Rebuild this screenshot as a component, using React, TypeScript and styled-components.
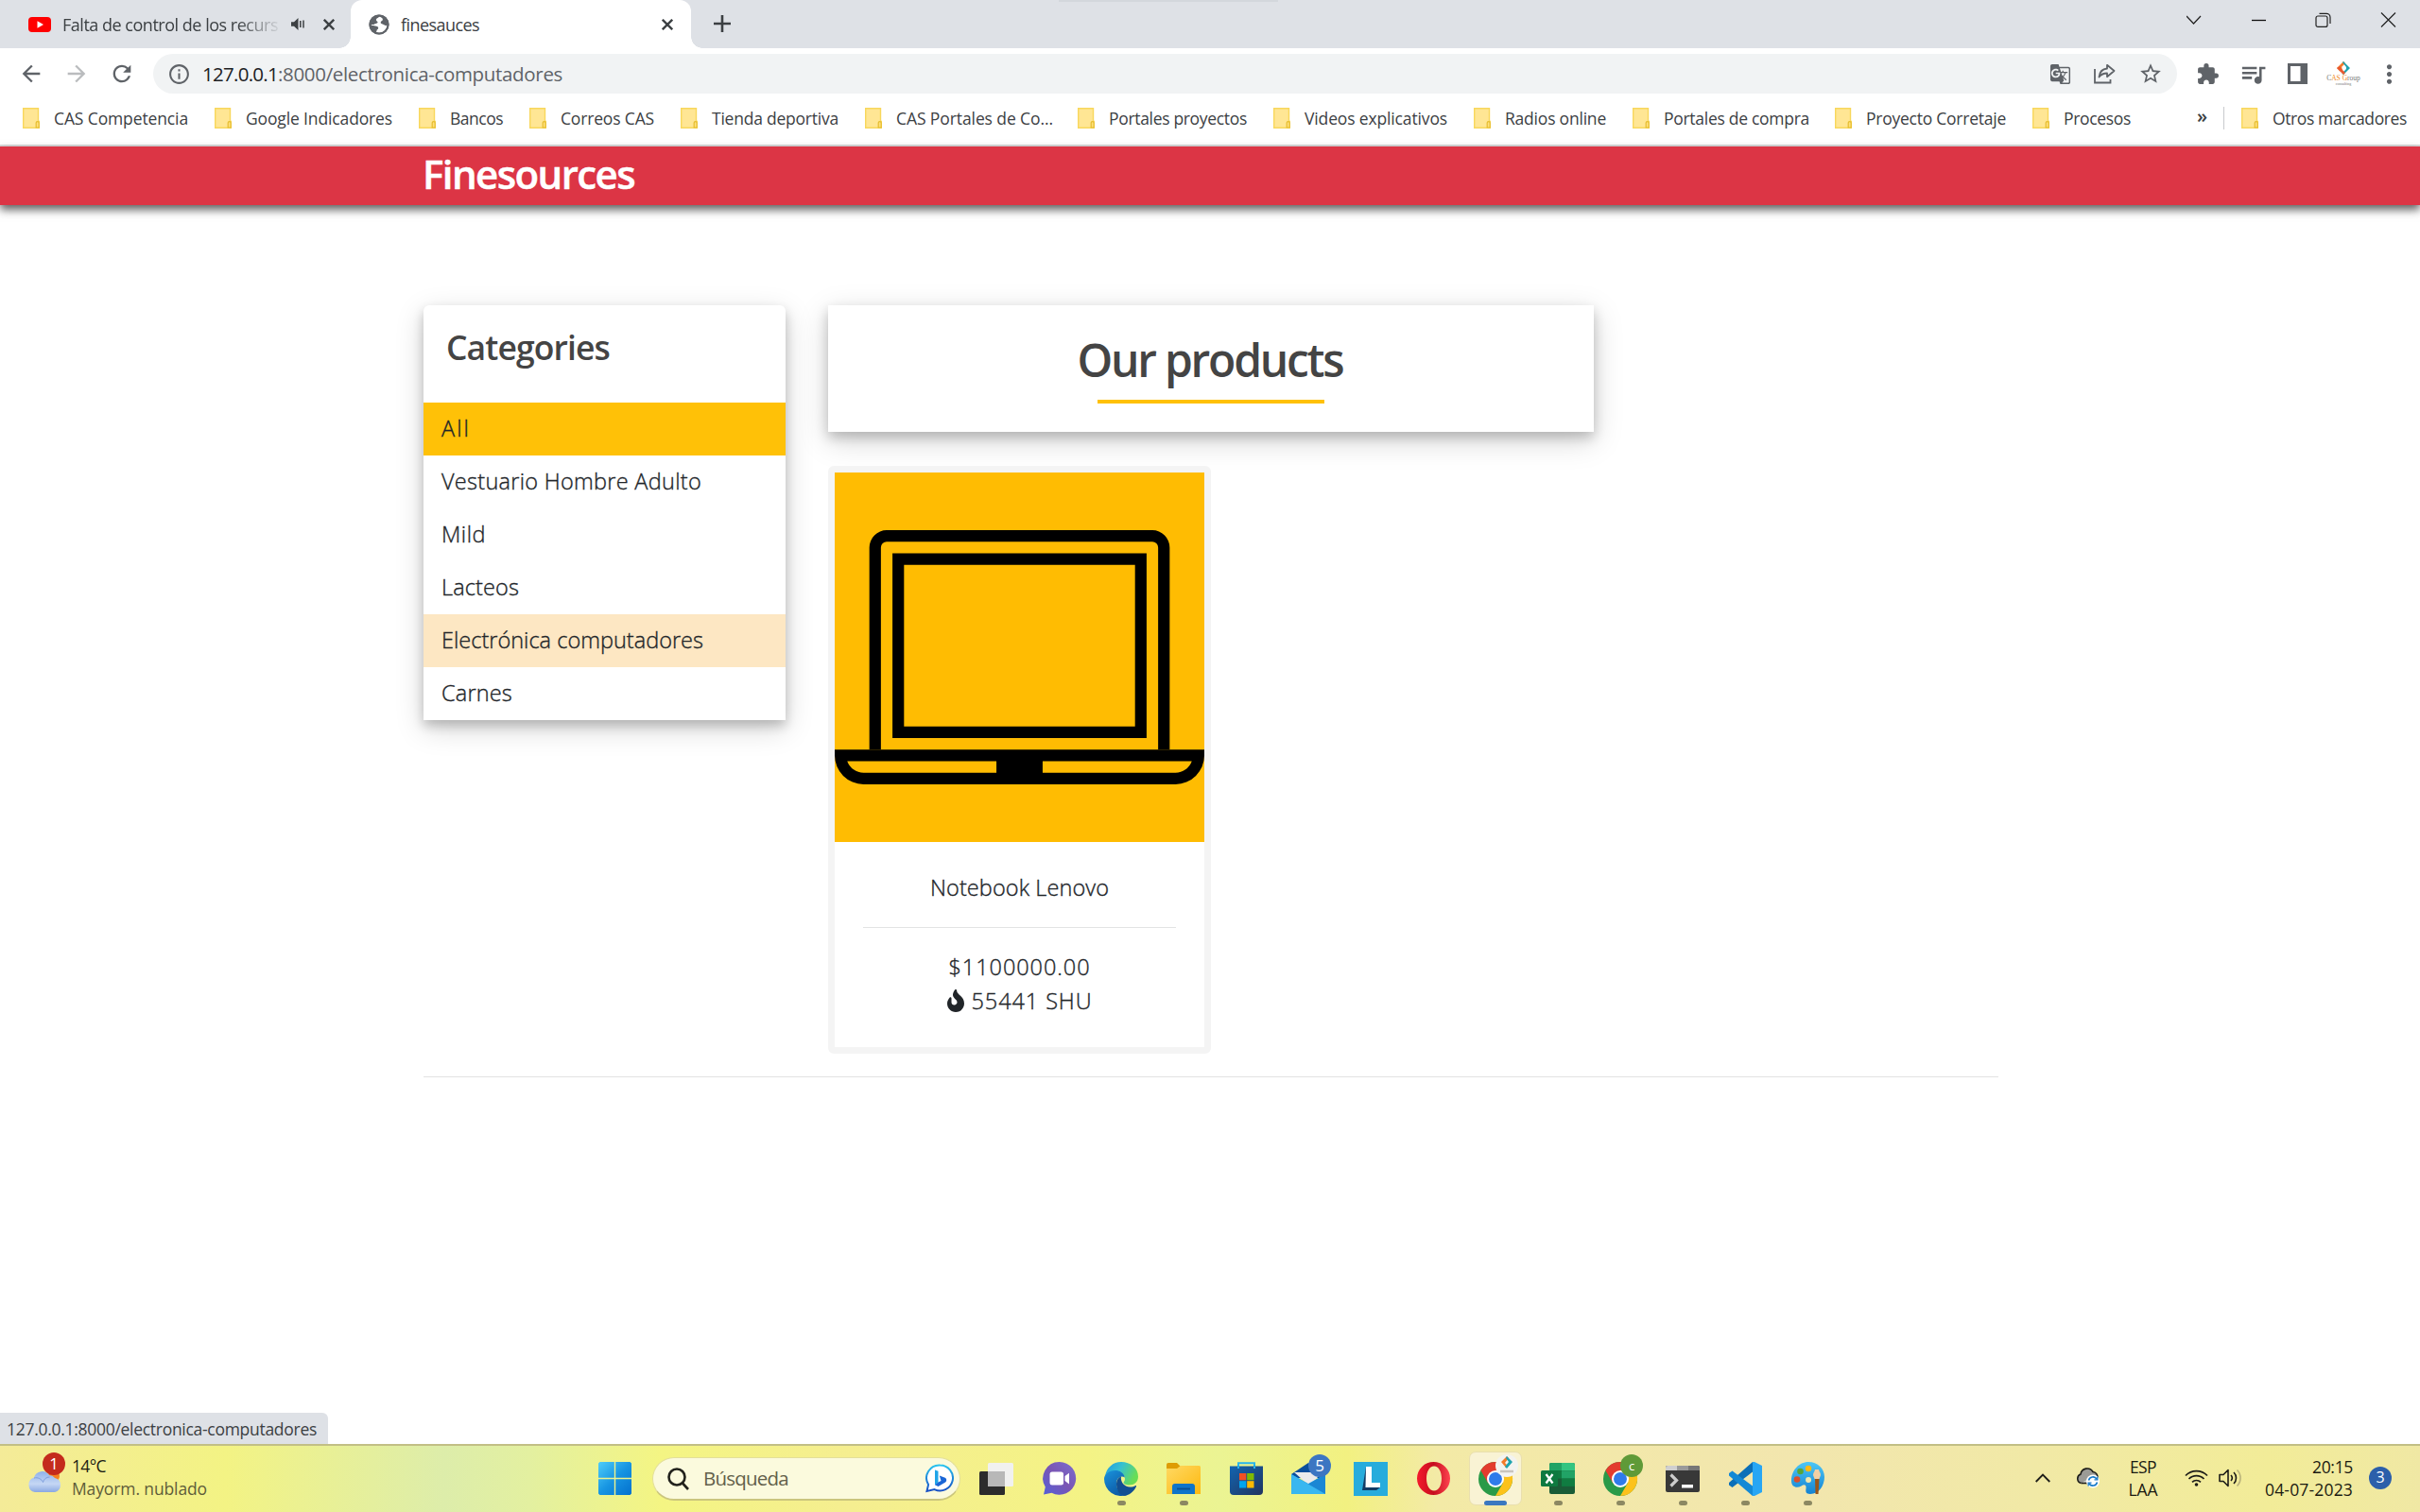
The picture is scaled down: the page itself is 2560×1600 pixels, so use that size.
import React, { useLayoutEffect, useRef } from "react";
import styled, { createGlobalStyle } from "styled-components";
import {
  MdArrowBack,
  MdArrowForward,
  MdRefresh,
  MdInfoOutline,
  MdGTranslate,
  MdStarBorder,
  MdExtension,
  MdQueueMusic,
  MdMoreVert,
} from "react-icons/md";
import { FaFire } from "react-icons/fa";

const uiFont = `"Open Sans", "Noto Sans", sans-serif`;
const siteFont = `"Open Sans", "Noto Sans", sans-serif`;

const GlobalStyle = createGlobalStyle`
  * { box-sizing: border-box; }
  html, body { margin: 0; padding: 0; background: #fff; overflow: hidden; }
  svg { display: block; flex: none; }
`;

/* ---------- text tracked to a given width ---------- */

const Tracked = styled.span`
  display: inline-block;
  white-space: pre;
`;

function Text({ w, children }: { w: number; children: string }) {
  const ref = useRef<HTMLSpanElement>(null);
  useLayoutEffect(() => {
    const el = ref.current;
    if (!el) return;
    el.style.letterSpacing = "0px";
    const natural = el.getBoundingClientRect().width;
    el.style.letterSpacing = `${(w - natural) / children.length}px`;
  }, [w, children]);
  return <Tracked ref={ref}>{children}</Tracked>;
}

/* ---------- window ---------- */

const Window = styled.div`
  display: flex;
  flex-direction: column;
  width: 2560px;
  height: 1600px;
  overflow: hidden;
  font-family: ${uiFont};
  color: #3c4043;
`;

const TabStrip = styled.div`
  position: relative;
  display: flex;
  height: 51px;
  background: #dee1e6;
`;

const DragHandle = styled.div`
  position: absolute;
  left: 1120px;
  top: 0;
  width: 232px;
  height: 2px;
  background: #d3d7dc;
`;

const Tab = styled.div<{ $active?: boolean; $w: number; $pad: number }>`
  position: relative;
  display: flex;
  align-items: center;
  width: ${(p) => p.$w}px;
  padding-left: ${(p) => p.$pad}px;
  background: ${(p) => (p.$active ? "#fff" : "transparent")};
  border-radius: 12px 12px 0 0;
  font-size: 18px;
  line-height: 50px;
  ${(p) =>
    p.$active &&
    `
    &::before, &::after {
      content: "";
      position: absolute;
      bottom: 0;
      width: 12px;
      height: 12px;
    }
    &::before { left: -12px; background: radial-gradient(circle at 0 0, transparent 11.5px, #fff 12px); }
    &::after { right: -12px; background: radial-gradient(circle at 100% 0, transparent 11.5px, #fff 12px); }
  `}
`;

const TabTitle = styled.span<{ $w: number; $fade?: boolean }>`
  width: ${(p) => p.$w}px;
  margin-left: 12px;
  overflow: hidden;
  white-space: nowrap;
  ${(p) => p.$fade && `mask-image: linear-gradient(90deg, #000 185px, transparent 233px);`}
`;

const NewTab = styled.div`
  padding: 16px 0 0 24px;
`;

const WindowButtons = styled.div`
  display: flex;
  margin-left: auto;
  padding: 13px 25px 0 0;
  gap: 51px;
`;

/* ---------- toolbar ---------- */

const Toolbar = styled.div`
  display: flex;
  align-items: center;
  height: 54px;
  padding-left: 19px;
  color: #5f6368;
`;

const NavButtons = styled.div`
  display: flex;
  align-items: center;
  gap: 20px;
  width: 143px;
`;

const Omnibox = styled.div`
  display: flex;
  align-items: center;
  width: 2141px;
  height: 42px;
  padding: 0 15px;
  border-radius: 21px;
  background: #f1f3f4;
`;

const Url = styled.div`
  margin-left: 12px;
  font-size: 20.5px;
  line-height: 40px;
  white-space: nowrap;
  color: #5f6368;
  b { font-weight: 400; color: #202124; }
`;

const OmniboxActions = styled.div`
  display: flex;
  align-items: center;
  gap: 24px;
  margin-left: auto;
`;

const Extensions = styled.div`
  display: flex;
  align-items: center;
  margin-left: 20px;
`;

const Gap = styled.span<{ $w: number }>`
  flex: none;
  width: ${(p) => p.$w}px;
`;

const BookmarkBar = styled.div`
  display: flex;
  align-items: center;
  height: 50px;
  padding: 0 0 8px 24px;
  border-bottom: 2px solid #dadada;
  font-size: 17.5px;
`;

const Bookmark = styled.div<{ $w?: number }>`
  display: flex;
  flex: none;
  align-items: center;
  gap: 15px;
  width: ${(p) => (p.$w ? `${p.$w}px` : "auto")};
  line-height: 24px;
`;

const MoreMarks = styled.span`
  width: 28px;
  font-size: 20px;
  font-weight: 600;
  line-height: 20px;
  padding-bottom: 4px;
`;

const Divider = styled.span`
  width: 1px;
  height: 24px;
  margin-right: 18px;
  background: #c8cacd;
`;

/* ---------- site ---------- */

const Site = styled.main`
  position: relative;
  display: flex;
  flex-direction: column;
  flex: 1;
  font-family: ${siteFont};
  color: #212529;
`;

const Navbar = styled.header`
  height: 62px;
  padding-left: 447px;
  background: #dc3545;
  box-shadow: 0 5px 9px rgba(0, 0, 0, 0.62);
  color: #fff;
  font-size: 42px;
  font-weight: 600;
  -webkit-text-stroke: 0.5px #fff;
  line-height: 58px;
`;

const Container = styled.div`
  display: flex;
  align-items: flex-start;
  gap: 45px;
  width: 1666px;
  height: 817px;
  margin: 106px 0 0 448px;
  border-bottom: 1px solid #e2e3e3;
`;

const cardShadow = `box-shadow: 0 6px 12px rgba(0, 0, 0, 0.2), 0 9px 30px rgba(0, 0, 0, 0.17);`;

const Categories = styled.aside`
  width: 383px;
  border-radius: 6px 6px 0 0;
  background: #fff;
  ${cardShadow}
`;

const CategoriesTitle = styled.h2`
  height: 103px;
  margin: 0;
  padding: 20px 0 0 24px;
  color: #444;
  font-size: 35.5px;
  font-weight: 600;
  line-height: 49px;
`;

const Category = styled.div<{ $bg?: string }>`
  height: 56px;
  padding-left: 19px;
  background: ${(p) => p.$bg || "transparent"};
  font-size: 23.5px;
  font-weight: 300;
  -webkit-text-stroke: 0.35px #212529;
  line-height: 55px;
`;

const Products = styled.section`
  display: flex;
  flex-direction: column;
  gap: 36px;
  width: 810px;
`;

const Heading = styled.div`
  display: flex;
  flex-direction: column;
  align-items: center;
  height: 134px;
  padding: 25px 2px 0 0;
  background: #fff;
  color: #444;
  font-size: 48px;
  font-weight: 600;
  line-height: 66px;
  ${cardShadow}
`;

const Underline = styled.div`
  width: 240px;
  height: 4px;
  margin: 9px 0 0 2px;
  background: #ffc107;
`;

const ProductCard = styled.article`
  display: flex;
  flex-direction: column;
  align-items: center;
  width: 405px;
  height: 622px;
  border: 7px solid #f4f4f4;
  border-radius: 6px;
  background: #fff;
  font-size: 23.5px;
  font-weight: 300;
  -webkit-text-stroke: 0.35px #212529;
  line-height: 36px;
`;

const ProductName = styled.div`
  margin-top: 30px;
`;

const Rule = styled.div`
  width: 331px;
  height: 1px;
  margin: 24px 0 23px;
  background: #e2e3e4;
`;

const Heat = styled.div`
  display: flex;
  align-items: center;
  gap: 5px;
  padding-right: 3px;
`;

const StatusBubble = styled.div`
  position: absolute;
  left: 0;
  bottom: 0;
  width: 347px;
  height: 33px;
  padding-left: 7px;
  border-radius: 0 6px 0 0;
  background: #dee1e6;
  color: #3c4043;
  font-size: 17.5px;
  line-height: 35px;
`;

/* ---------- taskbar ---------- */

const Taskbar = styled.footer`
  display: flex;
  align-items: center;
  height: 72px;
  border-top: 2px solid #c2bf85;
  background: linear-gradient(
    90deg,
    #f4eb98 0,
    #f3f384 240px,
    #ddedaa 470px,
    #e3f0a0 560px,
    #f4f583 700px,
    #f5ee90 900px,
    #f4f385 1150px,
    #ebf493 1290px,
    #f2f181 1425px,
    #f3eaa6 1520px,
    #f2e6ae 1900px,
    #f1e9a6 2150px,
    #f2ec98 2400px,
    #f0e8a4 2560px
  );
  font-size: 17.5px;
  color: #1b1b12;
`;

const Weather = styled.div`
  position: relative;
  display: flex;
  width: 617px;
  height: 70px;
  padding: 9px 0 0 76px;
  line-height: 24px;
  p { margin: 0; color: #5f5d3a; }
  p:first-child { color: #1b1b12; }
`;

const WeatherArt = styled.div`
  position: absolute;
  left: 28px;
  top: 6px;
`;

const Slot = styled.div<{ $active?: boolean }>`
  position: relative;
  display: flex;
  flex: none;
  align-items: center;
  justify-content: center;
  width: 66px;
  height: 70px;
  padding-bottom: 1px;
  ${(p) =>
    p.$active &&
    `&::before {
      content: "";
      position: absolute;
      inset: 6px 5px 7px 5px;
      border-radius: 7px;
      background: #f9f3d4;
      border: 1px solid #e9dfae;
    }`}
  svg { position: relative; overflow: visible; }
`;

const Running = styled.span<{ $active?: boolean }>`
  position: absolute;
  bottom: 7px;
  width: ${(p) => (p.$active ? 24 : 9)}px;
  height: 5px;
  border-radius: 3px;
  background: ${(p) => (p.$active ? "#3a78c0" : "#8c8862")};
`;

const Badge = styled.span<{ $bg: string; $x: number; $y: number; $size?: number }>`
  position: absolute;
  left: ${(p) => p.$x}px;
  top: ${(p) => p.$y}px;
  width: 24px;
  height: 24px;
  border-radius: 50%;
  background: ${(p) => p.$bg};
  color: #fff;
  font-size: ${(p) => p.$size || 17}px;
  line-height: 24px;
  text-align: center;
`;

const Search = styled.div`
  display: flex;
  align-items: center;
  width: 326px;
  height: 46px;
  margin: 0 5px 0 7px;
  padding: 0 6px 0 15px;
  border: 1px solid #e3df9a;
  border-bottom: 2px solid #cbc67d;
  border-radius: 23px;
  background: #fbfadd;
  color: #62604a;
  font-size: 20.5px;
  line-height: 40px;
`;

const SearchLabel = styled.span`
  flex: 1;
  margin: -2px 0 0 15px;
`;

const Tray = styled.div`
  display: flex;
  align-items: center;
  margin-left: auto;
  padding: 0 30px 2px 0;
`;

const Stack = styled.div<{ $align: "center" | "right"; $w: number }>`
  display: flex;
  flex-direction: column;
  align-items: ${(p) => (p.$align === "right" ? "flex-end" : "center")};
  width: ${(p) => p.$w}px;
  line-height: 24px;
  margin-top: -1px;
`;

const Notifications = styled.span`
  width: 24px;
  height: 24px;
  margin-left: 17px;
  border-radius: 50%;
  background: #2c5faa;
  color: #fff;
  font-size: 16px;
  line-height: 23px;
  text-align: center;
`;

const ServerMark = styled.span`
  display: flex;
  flex-direction: column;
  align-items: center;
  width: 32px;
  font-family: "Liberation Serif", serif;
  font-size: 7.5px;
  line-height: 8px;
  white-space: nowrap;
  color: #777;
  i { font-style: normal; color: #f08a24; }
  small { font-size: 4px; line-height: 4px; }
`;

/* ---------- drawings ---------- */

const Cross = ({ size = 12, stroke = 2.4 }: { size?: number; stroke?: number }) => (
  <svg width={size} height={size} viewBox={`0 0 ${size} ${size}`}>
    <path d={`M.8 .8L${size - 0.8} ${size - 0.8}M${size - 0.8} .8L.8 ${size - 0.8}`} stroke="#3c4043" strokeWidth={stroke} />
  </svg>
);

const YouTube = () => (
  <svg width="24" height="16" viewBox="0 0 24 16">
    <rect width="24" height="16" rx="4" fill="#f00" />
    <path d="M9.5 4.3L16 8l-6.500 3.700z" fill="#fff" />
  </svg>
);

const Globe = () => (
  <svg width="22" height="22" viewBox="0 0 22 22">
    <circle cx="11" cy="11" r="10.500" fill="#5f6368" />
    <path
      d="M11.500 2.500C10 4 7.500 4.500 8 6.500c.4 1.400 2 1 1.500 2.500C9 10.200 6.500 9.500 5.500 11H2.500c.5 1.500 3 1 4.500 1.500 1.500.4 3 .3 3.200 2 .2 1.500-1.700 1.500-1.700 3L8 19c2 .9 4.500.9 6.500 0 3-1.300 5-4.200 5-7.500-1.300.8-2.300.6-3.200-.3-1.200-1.200-3.600-.5-3.600-2.500 0-1.500 2-1.500 2.200-3 .1-1.400-1.300-2-3.400-3.200z"
      fill="#fff"
    />
    <circle cx="11" cy="11" r="9.600" fill="none" stroke="#5f6368" strokeWidth="2" />
  </svg>
);

const Speaker = () => (
  <svg width="14" height="13" viewBox="0 0 14 13">
    <path d="M0 4.300h3L7.500 0v13L3 8.700H0z" fill="#3c4043" />
    <path d="M9.800 3v7M13 2.500v8" stroke="#3c4043" strokeWidth="1.500" />
  </svg>
);

const Folder = () => (
  <svg width="18" height="22" viewBox="0 0 18 22">
    <path d="M.7 .7H16.500V14.500H17.300V21.300H.7z" fill="#ffe694" stroke="#f8d75c" strokeWidth="1.400" />
    <path d="M14.200 21V16c0-1.800 3-1.800 3 0v5z" fill="#ffe07a" stroke="#e6bd2f" strokeWidth="1.200" />
  </svg>
);

const Share = () => (
  <svg width="23" height="22" viewBox="0 0 23 22" fill="none" stroke="#5f6368" strokeWidth="1.800">
    <path d="M1 6v14.500h16.500V17" />
    <path d="M14 1.800L21.500 8 14 14.200V10.500C10 10.500 7.500 11.800 5.500 14.500 6 9.500 9 6 14 5.500z" strokeLinejoin="round" />
  </svg>
);

const SidePanel = () => (
  <svg width="21" height="22" viewBox="0 0 21 22">
    <path d="M0 0h21v22H0zM3 3v16h10.500V3z" fill="#5f6368" fillRule="evenodd" />
  </svg>
);

const CasMark = ({ size = 14 }: { size?: number }) => (
  <svg width={size} height={size} viewBox="0 0 14 14">
    <path d="M7 0L0 7l3.500 3.500L7 7.500 5 6l4-4z" fill="#f47b2a" />
    <path d="M7 0l7 7-7 7-1.500-1.500L10 8 10 6 6 1z" fill="#1fa3ae" />
    <path d="M0 7L7 14l2-2-4-4-2-3z" fill="#e9592f" />
    <path d="M7 5l2 2-2 2-2-2z" fill="#fff" />
  </svg>
);

const Laptop = () => (
  <svg width="391" height="391" viewBox="0 0 64 64">
    <rect width="64" height="64" fill="#ffbc02" />
    <path d="M6 48V13a3 3 0 0 1 3-3H55a3 3 0 0 1 3 3V48H56V13a1 1 0 0 0-1-1H9a1 1 0 0 0-1 1V48z" />
    <path d="M10 14H54V46H10zM12 16V44H52V16z" fillRule="evenodd" />
    <path d="M0 48H64V49A5 5 0 0 1 59 54H5A5 5 0 0 1 0 49zM2.170 50A3 3 0 0 0 5 52H28V50zM36 50V52H59A3 3 0 0 0 61.830 50z" fillRule="evenodd" />
  </svg>
);

const CloudArt = () => (
  <svg width="38" height="46" viewBox="0 0 38 46">
    <defs>
      <linearGradient id="cl" x1="0" y1="0" x2="0" y2="1">
        <stop offset="0" stopColor="#8fb2ec" />
        <stop offset=".6" stopColor="#c5d7f4" />
        <stop offset="1" stopColor="#8aa8e2" />
      </linearGradient>
    </defs>
    <circle cx="29" cy="26" r="6" fill="#f58220" />
    <path d="M9 43a8 8 0 0 1-1-15.500A9 9 0 0 1 24 25a8 8 0 0 1 6 3 7.700 7.700 0 0 1 0 15z" fill="url(#cl)" />
    <path d="M8 28c4-1 8 1 9.500 4.500C18.500 29 21 27 24.500 27" fill="none" stroke="#7f9fdc" strokeWidth="1" />
  </svg>
);

const Start = () => (
  <svg width="35" height="35" viewBox="0 0 35 35">
    <defs>
      <linearGradient id="wn" x1="0" y1="0" x2="1" y2="1">
        <stop offset="0" stopColor="#4fcdfa" />
        <stop offset=".5" stopColor="#1795e2" />
        <stop offset="1" stopColor="#0370ce" />
      </linearGradient>
    </defs>
    <path d="M1.500 0H16.800V16.800H0V1.500zM18.200 0H33.500L35 1.500V16.800H18.200zM0 18.200H16.800V35H1.500L0 33.500zM18.200 18.200H35V33.500L33.500 35H18.200z" fill="url(#wn)" />
  </svg>
);

const Magnifier = () => (
  <svg width="23" height="24" viewBox="0 0 23 24" fill="none" stroke="#22221c" strokeWidth="2.600">
    <circle cx="10" cy="10" r="8.500" />
    <path d="M16 16.500L22 23" />
  </svg>
);

const Bing = () => (
  <svg width="30" height="31" viewBox="0 0 30 31">
    <defs>
      <linearGradient id="bg" x1="0" y1="0" x2="0" y2="1">
        <stop offset="0" stopColor="#29c3ee" />
        <stop offset="1" stopColor="#174fc4" />
      </linearGradient>
    </defs>
    <path d="M15.500 1.500a13.500 13.500 0 1 1-6 25.600L1.500 29l1.600-7A13.500 13.500 0 0 1 15.500 1.500z" fill="#fff" stroke="url(#bg)" strokeWidth="2" />
    <path d="M10 6.500l3.500 1.200v12L10 22.500z" fill="#1fa4e8" />
    <path d="M10 22.300l3.500-2.800 3-1.500-1.700-5.500 6 2.300c2 1.200 1.800 3.500.3 4.700L13.500 24z" fill="#1a66d6" />
  </svg>
);

const TaskView = () => (
  <svg width="36" height="34" viewBox="0 0 36 34">
    <rect y="9" width="27" height="25" rx="1.500" fill="#2c2c2c" />
    <rect x="9" width="27" height="25" rx="1.500" fill="#f1f1f0" />
    <rect x="9" y="9" width="18" height="16" fill="#b8b8b8" />
  </svg>
);

const Chat = () => (
  <svg width="35" height="35" viewBox="0 0 35 35">
    <defs>
      <linearGradient id="ch" x1="1" y1="0" x2="0" y2="1">
        <stop offset="0" stopColor="#7b6fd0" />
        <stop offset=".5" stopColor="#7a55b4" />
        <stop offset="1" stopColor="#5460d8" />
      </linearGradient>
    </defs>
    <path d="M17.500 0a17.400 17.400 0 1 1-8 32.700L1 34.500l1.800-8A17.400 17.400 0 0 1 17.500 0z" fill="url(#ch)" />
    <rect x="7.500" y="10.500" width="14.500" height="14" rx="2.500" fill="#fff" />
    <path d="M23.500 15l4.500-3.200v11.600L23.500 20z" fill="#fff" />
  </svg>
);

const Edge = () => (
  <svg width="36" height="36" viewBox="0 0 36 36">
    <defs>
      <linearGradient id="e1" x1="0" y1="0" x2="1" y2=".4">
        <stop offset="0" stopColor="#1f9ae0" />
        <stop offset=".5" stopColor="#36c1d0" />
        <stop offset="1" stopColor="#69dd55" />
      </linearGradient>
      <linearGradient id="e2" x1="0" y1="0" x2=".6" y2="1">
        <stop offset="0" stopColor="#1a93dc" />
        <stop offset="1" stopColor="#0c59a4" />
      </linearGradient>
    </defs>
    <path d="M1 15C2.500 6 9.500 0 18 0c10 0 18 6.500 18 15.500 0 6-4.500 9-9.500 9-3.500 0-6-1.500-6-2.500s1.500-1.500 1.500-4c0-4-3.500-7-9-7C7.500 11 3 13 1 15z" fill="url(#e1)" />
    <path d="M0 18c0-5 5.500-9 11.500-9 5 0 9.500 2.500 10.300 7.500C18 14 13 17 13 23c0 6.500 4.500 12 11 12A18 18 0 0 1 0 18z" fill="url(#e2)" />
    <path d="M13 23c0-3.500 2-6.500 5-7.500-1 5 3 11 9.500 11 2.300 0 4.200-.6 5.500-1.300 1-.4 1.300.4.800 1.200C31.500 31 26 35.800 21 35.800 15.500 34.500 13 29 13 23z" fill="#124f92" />
  </svg>
);

const Explorer = () => (
  <svg width="36" height="33" viewBox="0 0 36 33">
    <defs>
      <linearGradient id="fo" x1="0" y1="0" x2="1" y2="1">
        <stop offset="0" stopColor="#ffd964" />
        <stop offset="1" stopColor="#fdb90f" />
      </linearGradient>
    </defs>
    <path d="M0 2a2 2 0 0 1 2-2h9l4 4-3 4H0z" fill="#de9c05" />
    <path d="M0 6h11l4-3h19.500A1.500 1.500 0 0 1 36 4.500V33H0z" fill="url(#fo)" />
    <path d="M6 33v-8a3 3 0 0 1 3-3h18a3 3 0 0 1 3 3v8z" fill="#0f74c9" />
    <path d="M11 27.500h14" stroke="#0b4f91" strokeWidth="1.800" />
  </svg>
);

const Store = () => (
  <svg width="35" height="35" viewBox="0 0 35 35">
    <defs>
      <linearGradient id="st" x1="0" y1="0" x2="1" y2="1">
        <stop offset="0" stopColor="#1264b0" />
        <stop offset="1" stopColor="#21345f" />
      </linearGradient>
    </defs>
    <path d="M9 7V1.200H26V7" fill="none" stroke="#27b5ec" strokeWidth="2" />
    <path d="M0 4.500H35V31a4 4 0 0 1-4 4H4a4 4 0 0 1-4-4z" fill="url(#st)" />
    <rect x="10" y="12" width="7.300" height="7.300" fill="#f25022" />
    <rect x="18.200" y="12" width="7.300" height="7.300" fill="#7fba00" />
    <rect x="10" y="20.200" width="7.300" height="7.300" fill="#00a4ef" />
    <rect x="18.200" y="20.200" width="7.300" height="7.300" fill="#ffb900" />
    <path d="M9 7V4.500M26 7V4.500" stroke="#27b5ec" strokeWidth="2" />
  </svg>
);

const Mail = () => (
  <svg width="36" height="33" viewBox="0 0 36 33">
    <path d="M0 12L18 0l18 12v4H0z" fill="#0a4f9c" />
    <path d="M3 10H33L19 24z" fill="#ebebeb" />
    <path d="M0 12L18 22 36 12V33H0z" fill="#28a4e6" />
    <path d="M0 33L36 12V33z" fill="#1b87d4" />
    <path d="M0 12L36 33H0z" fill="#39b7f0" />
  </svg>
);

const LTile = () => (
  <svg width="36" height="36" viewBox="0 0 36 36">
    <rect width="36" height="36" fill="#27acdc" />
    <path d="M13 5L9 30H24L28 27H14z" fill="#123c66" />
    <path d="M13 5H19V22H28V27H12.500z" fill="#fff" />
  </svg>
);

const Opera = () => (
  <svg width="35" height="35" viewBox="0 0 35 35">
    <defs>
      <linearGradient id="op" x1="0" y1="0" x2="1" y2="0">
        <stop offset="0" stopColor="#f51b2d" />
        <stop offset=".5" stopColor="#c50d1e" />
        <stop offset="1" stopColor="#ff4550" />
      </linearGradient>
    </defs>
    <path d="M17.500 0a17.500 17.500 0 1 1 0 35 17.500 17.500 0 1 1 0-35zM18 4.500c-5 0-8 6-8 13s3 13 8 13 8-6 8-13-3-13-8-13z" fill="url(#op)" fillRule="evenodd" />
  </svg>
);

const Chrome = () => (
  <svg width="36" height="36" viewBox="0 0 48 48">
    <circle cx="24" cy="24" r="24" fill="#2a9a48" />
    <path d="M24 12H44.800A24 24 0 0 1 24 48L34.400 30z" fill="#fcc21b" />
    <path d="M3.200 12A24 24 0 0 1 44.800 12H24L13.600 30z" fill="#e33b2e" />
    <circle cx="24" cy="24" r="12" fill="#fff" />
    <circle cx="24" cy="24" r="9.300" fill="#2f7bea" />
  </svg>
);

const Excel = () => (
  <svg width="36" height="33" viewBox="0 0 36 33">
    <rect x="9" width="27" height="33" rx="2" fill="#1a5c37" />
    <path d="M9 2a2 2 0 0 1 2-2H22V8.300H9z" fill="#21a366" />
    <path d="M22 0H34a2 2 0 0 1 2 2V8.300H22z" fill="#33c481" />
    <rect x="9" y="8.300" width="13" height="8.300" fill="#107c41" />
    <rect x="22" y="8.300" width="14" height="8.300" fill="#21a366" />
    <rect x="22" y="16.600" width="14" height="8.300" fill="#107c41" />
    <rect y="8" width="18" height="17" rx="1.500" fill="#0e7a40" />
    <path d="M5.500 12l7 9.500M12.500 12l-7 9.500" stroke="#fff" strokeWidth="2.300" />
  </svg>
);

const Terminal = () => (
  <svg width="36" height="28" viewBox="0 0 36 28">
    <rect width="36" height="28" rx="2" fill="#383838" />
    <path d="M2 0H12V5H0V2a2 2 0 0 1 2-2z" fill="#cfcfcf" />
    <rect x="12" width="12" height="5" fill="#9a9a9a" />
    <path d="M24 0H34a2 2 0 0 1 2 2V5H24z" fill="#777" />
    <path d="M5.500 9.500L11.500 15.500 5.500 21.500" fill="none" stroke="#ccc" strokeWidth="3.200" />
    <rect x="17" y="20" width="12" height="3.500" fill="#fff" />
  </svg>
);

const VsCode = () => (
  <svg width="36" height="36" viewBox="0 0 36 36">
    <path d="M26 0L28 9 4.500 27 1 24.500V22z" fill="#0b6fb8" />
    <path d="M26 36L28 27 4.500 9.500 1 12V14.500z" fill="#1489d6" />
    <path d="M26 0V36L28 36 36 32V4L28 0z" fill="#28a6f4" />
  </svg>
);

const Paint = () => (
  <svg width="35" height="35" viewBox="0 0 35 35">
    <defs>
      <linearGradient id="pa" x1="0" y1="0" x2="0" y2="1">
        <stop offset="0" stopColor="#4cc7f6" />
        <stop offset="1" stopColor="#1583d2" />
      </linearGradient>
    </defs>
    <path d="M18 0c10 0 17 7 17 16s-6 18-15 18c-5 0-5-3-4.500-6 .5-4-2-4.500-5-2.500C6 28 0 27 0 20 0 9 8 0 18 0zM18 16a3 3 0 1 0 .1 6 3 3 0 0 0-.1-6z" fill="url(#pa)" fillRule="evenodd" />
    <circle cx="18" cy="7" r="3.300" fill="#fdb913" />
    <circle cx="9.500" cy="10" r="3.300" fill="#57a639" />
    <circle cx="6" cy="18.500" r="3.300" fill="#d94f2b" />
    <path d="M25 18H29.500L28.500 34H25.500z" fill="#9a5518" />
    <path d="M23 14c0-3 2-4 2-6h4c0 2 2 3 2 6l-1.500 4h-5z" fill="#f2cfa4" />
  </svg>
);

const OneDrive = () => (
  <svg width="26" height="22" viewBox="0 0 26 22">
    <path d="M5.500 16.500a5 5 0 0 1-.5-9.500 7 7 0 0 1 13-2.500 6 6 0 0 1 5 6" fill="#9b9b96" stroke="#1d1d18" strokeWidth="1.600" />
    <path d="M5.500 16.500L18 9l5 1.500v6z" fill="#d2d2cc" />
    <path d="M5.500 16.500H12" stroke="#1d1d18" strokeWidth="1.600" />
    <circle cx="18" cy="14.500" r="7" fill="#fff" />
    <path d="M13.500 13.500a4.700 4.700 0 0 1 8.500-1.500M22.500 15.500a4.700 4.700 0 0 1-8.500 1.500" fill="none" stroke="#1478c8" strokeWidth="1.600" />
    <path d="M22.800 9.500v3.300h-3.300M13.200 19.500v-3.300h3.300" fill="none" stroke="#1478c8" strokeWidth="1.300" />
  </svg>
);

const Wifi = () => (
  <svg width="25" height="18" viewBox="0 0 25 18" fill="none" stroke="#1d1d18" strokeWidth="1.700">
    <path d="M1 6.500a16 16 0 0 1 23 0M4.500 10a11 11 0 0 1 16 0M8 13.300a6.500 6.500 0 0 1 9 0" />
    <circle cx="12.500" cy="16" r="1.800" fill="#1d1d18" stroke="none" />
  </svg>
);

const Volume = () => (
  <svg width="25" height="20" viewBox="0 0 25 20" fill="none" stroke="#1d1d18" strokeWidth="1.600">
    <path d="M1 6.500H5L10 1.500V18.500L5 13.500H1z" strokeLinejoin="round" />
    <path d="M13 7a4.500 4.500 0 0 1 0 6M16 4a8.500 8.500 0 0 1 0 12" />
    <path d="M19.500 1.500a12 12 0 0 1 0 17" stroke="#b9b37b" />
  </svg>
);

/* ---------- data ---------- */

const bookmarks: [string, number, number][] = [
  ["CAS Competencia", 203, 142],
  ["Google Indicadores", 216, 155],
  ["Bancos", 117, 56],
  ["Correos CAS", 160, 99],
  ["Tienda deportiva", 195, 134],
  ["CAS Portales de Co...", 225, 166],
  ["Portales proyectos", 207, 146],
  ["Videos explicativos", 212, 151],
  ["Radios online", 168, 107],
  ["Portales de compra", 214, 154],
  ["Proyecto Corretaje", 209, 148],
  ["Procesos", 174, 71],
];

const categories: [string, number, string?][] = [
  ["All", 31, "#ffc107"],
  ["Vestuario Hombre Adulto", 275],
  ["Mild", 47],
  ["Lacteos", 82],
  ["Electrónica computadores", 277, "#fde7c3"],
  ["Carnes", 75],
];

export default function App() {
  return (
    <Window>
      <GlobalStyle />
      <TabStrip>
        <DragHandle />
        <Tab $w={371} $pad={30}>
          <YouTube />
          <TabTitle $w={233} $fade>
            <Text w={228}>Falta de control de los recurs</Text>
          </TabTitle>
          <Gap $w={9} />
          <Speaker />
          <Gap $w={20} />
          <Cross />
        </Tab>
        <Tab $active $w={360} $pad={19}>
          <Globe />
          <TabTitle $w={276}>
            <Text w={83}>finesauces</Text>
          </TabTitle>
          <Cross />
        </Tab>
        <NewTab>
          <svg width="18" height="18" viewBox="0 0 18 18">
            <path d="M9 0V18M0 9H18" stroke="#3c4043" strokeWidth="2.600" />
          </svg>
        </NewTab>
        <WindowButtons>
          <svg width="17" height="16" viewBox="2 0 17 16">
            <path d="M2 4l7.500 8L17 4" fill="none" stroke="#222" strokeWidth="1.200" />
          </svg>
          <svg width="17" height="16" viewBox="0 0 17 16">
            <path d="M1 8.500h15" stroke="#111" strokeWidth="1.300" />
          </svg>
          <svg width="18" height="16" viewBox="0 0 18 16" fill="none" stroke="#222" strokeWidth="1.200">
            <rect x="1" y="4" width="12" height="11.400" rx="2" />
            <path d="M4.500 1.300H12a4 4 0 0 1 4 4V12" />
          </svg>
          <svg width="17" height="16" viewBox="0 0 17 16">
            <path d="M1 .5l15 15M16 .5L1 15.500" stroke="#222" strokeWidth="1.200" />
          </svg>
        </WindowButtons>
      </TabStrip>

      <Toolbar>
        <NavButtons>
          <MdArrowBack size={28} />
          <MdArrowForward size={28} color="#babcbe" />
          <MdRefresh size={28} />
        </NavButtons>
        <Omnibox>
          <MdInfoOutline size={25} />
          <Url>
            <b>
              <Text w={80}>127.0.0.1</Text>
            </b>
            <Text w={301}>:8000/electronica-computadores</Text>
          </Url>
          <OmniboxActions>
            <MdGTranslate size={23} />
            <Share />
            <MdStarBorder size={26} />
          </OmniboxActions>
        </Omnibox>
        <Extensions>
          <MdExtension size={25} />
          <Gap $w={20} />
          <MdQueueMusic size={31} />
          <Gap $w={21} />
          <SidePanel />
          <Gap $w={22} />
          <ServerMark>
            <CasMark />
            <span>
              C<i>AS G</i>roup
            </span>
            <small>consulting</small>
          </ServerMark>
          <Gap $w={17} />
          <MdMoreVert size={31} />
        </Extensions>
      </Toolbar>

      <BookmarkBar>
        {bookmarks.map(([name, pitch, w]) => (
          <Bookmark key={name} $w={pitch}>
            <Folder />
            <Text w={w}>{name}</Text>
          </Bookmark>
        ))}
        <MoreMarks>»</MoreMarks>
        <Divider />
        <Bookmark>
          <Folder />
          <Text w={142}>Otros marcadores</Text>
        </Bookmark>
      </BookmarkBar>

      <Site>
        <Navbar>
          <Text w={224}>Finesources</Text>
        </Navbar>
        <Container>
          <Categories>
            <CategoriesTitle>
              <Text w={173}>Categories</Text>
            </CategoriesTitle>
            {categories.map(([name, w, bg]) => (
              <Category key={name} $bg={bg}>
                <Text w={w}>{name}</Text>
              </Category>
            ))}
          </Categories>
          <Products>
            <Heading>
              <Text w={281}>Our products</Text>
              <Underline />
            </Heading>
            <ProductCard>
              <Laptop />
              <ProductName>
                <Text w={189}>Notebook Lenovo</Text>
              </ProductName>
              <Rule />
              <Text w={150}>$1100000.00</Text>
              <Heat>
                <FaFire size={24} />
                <Text w={128}>55441 SHU</Text>
              </Heat>
            </ProductCard>
          </Products>
        </Container>
        <StatusBubble>
          <Text w={328}>127.0.0.1:8000/electronica-computadores</Text>
        </StatusBubble>
      </Site>

      <Taskbar>
        <Weather>
          <WeatherArt>
            <CloudArt />
            <Badge $bg="#c42b1c" $x={17} $y={1}>1</Badge>
          </WeatherArt>
          <div>
            <p><Text w={36}>14°C</Text></p>
            <p><Text w={143}>Mayorm. nublado</Text></p>
          </div>
        </Weather>
        <Slot><Start /></Slot>
        <Search>
          <Magnifier />
          <SearchLabel><Text w={90}>Búsqueda</Text></SearchLabel>
          <Bing />
        </Search>
        <Slot><TaskView /></Slot>
        <Slot><Chat /></Slot>
        <Slot><Edge /><Running /></Slot>
        <Slot><Explorer /><Running /></Slot>
        <Slot><Store /></Slot>
        <Slot><Mail /><Badge $bg="#3c76c2" $x={33} $y={9}>5</Badge></Slot>
        <Slot><LTile /></Slot>
        <Slot><Opera /></Slot>
        <Slot $active>
          <Chrome />
          <Badge $bg="#f3f3f0" $x={33} $y={9}>
            <svg width="24" height="24" viewBox="0 0 24 24">
              <path d="M12 2L6 8l5 6 1-3-2-2 4-5z" fill="#f47b2a" />
              <path d="M12 2l6 6-6 7-2-2 4-5-3-4z" fill="#1fa3ae" />
              <path d="M5 18h14" stroke="#c9c4bd" strokeWidth="2.500" />
            </svg>
          </Badge>
          <Running $active />
        </Slot>
        <Slot><Excel /><Running /></Slot>
        <Slot><Chrome /><Badge $bg="#5f9a38" $x={33} $y={9} $size={13}>c</Badge><Running /></Slot>
        <Slot><Terminal /><Running /></Slot>
        <Slot><VsCode /><Running /></Slot>
        <Slot><Paint /><Running /></Slot>
        <Tray>
          <svg width="16" height="10" viewBox="0 0 16 10">
            <path d="M.7 9L8 1.500 15.300 9" fill="none" stroke="#1d1d18" strokeWidth="1.800" />
          </svg>
          <Gap $w={27} />
          <OneDrive />
          <Gap $w={22} />
          <Stack $align="center" $w={46}>
            <Text w={28}>ESP</Text>
            <Text w={31}>LAA</Text>
          </Stack>
          <Gap $w={21} />
          <Wifi />
          <Gap $w={11} />
          <Volume />
          <Gap $w={17} />
          <Stack $align="right" $w={100}>
            <Text w={43}>20:15</Text>
            <Text w={93}>04-07-2023</Text>
          </Stack>
          <Notifications>3</Notifications>
        </Tray>
      </Taskbar>
    </Window>
  );
}
